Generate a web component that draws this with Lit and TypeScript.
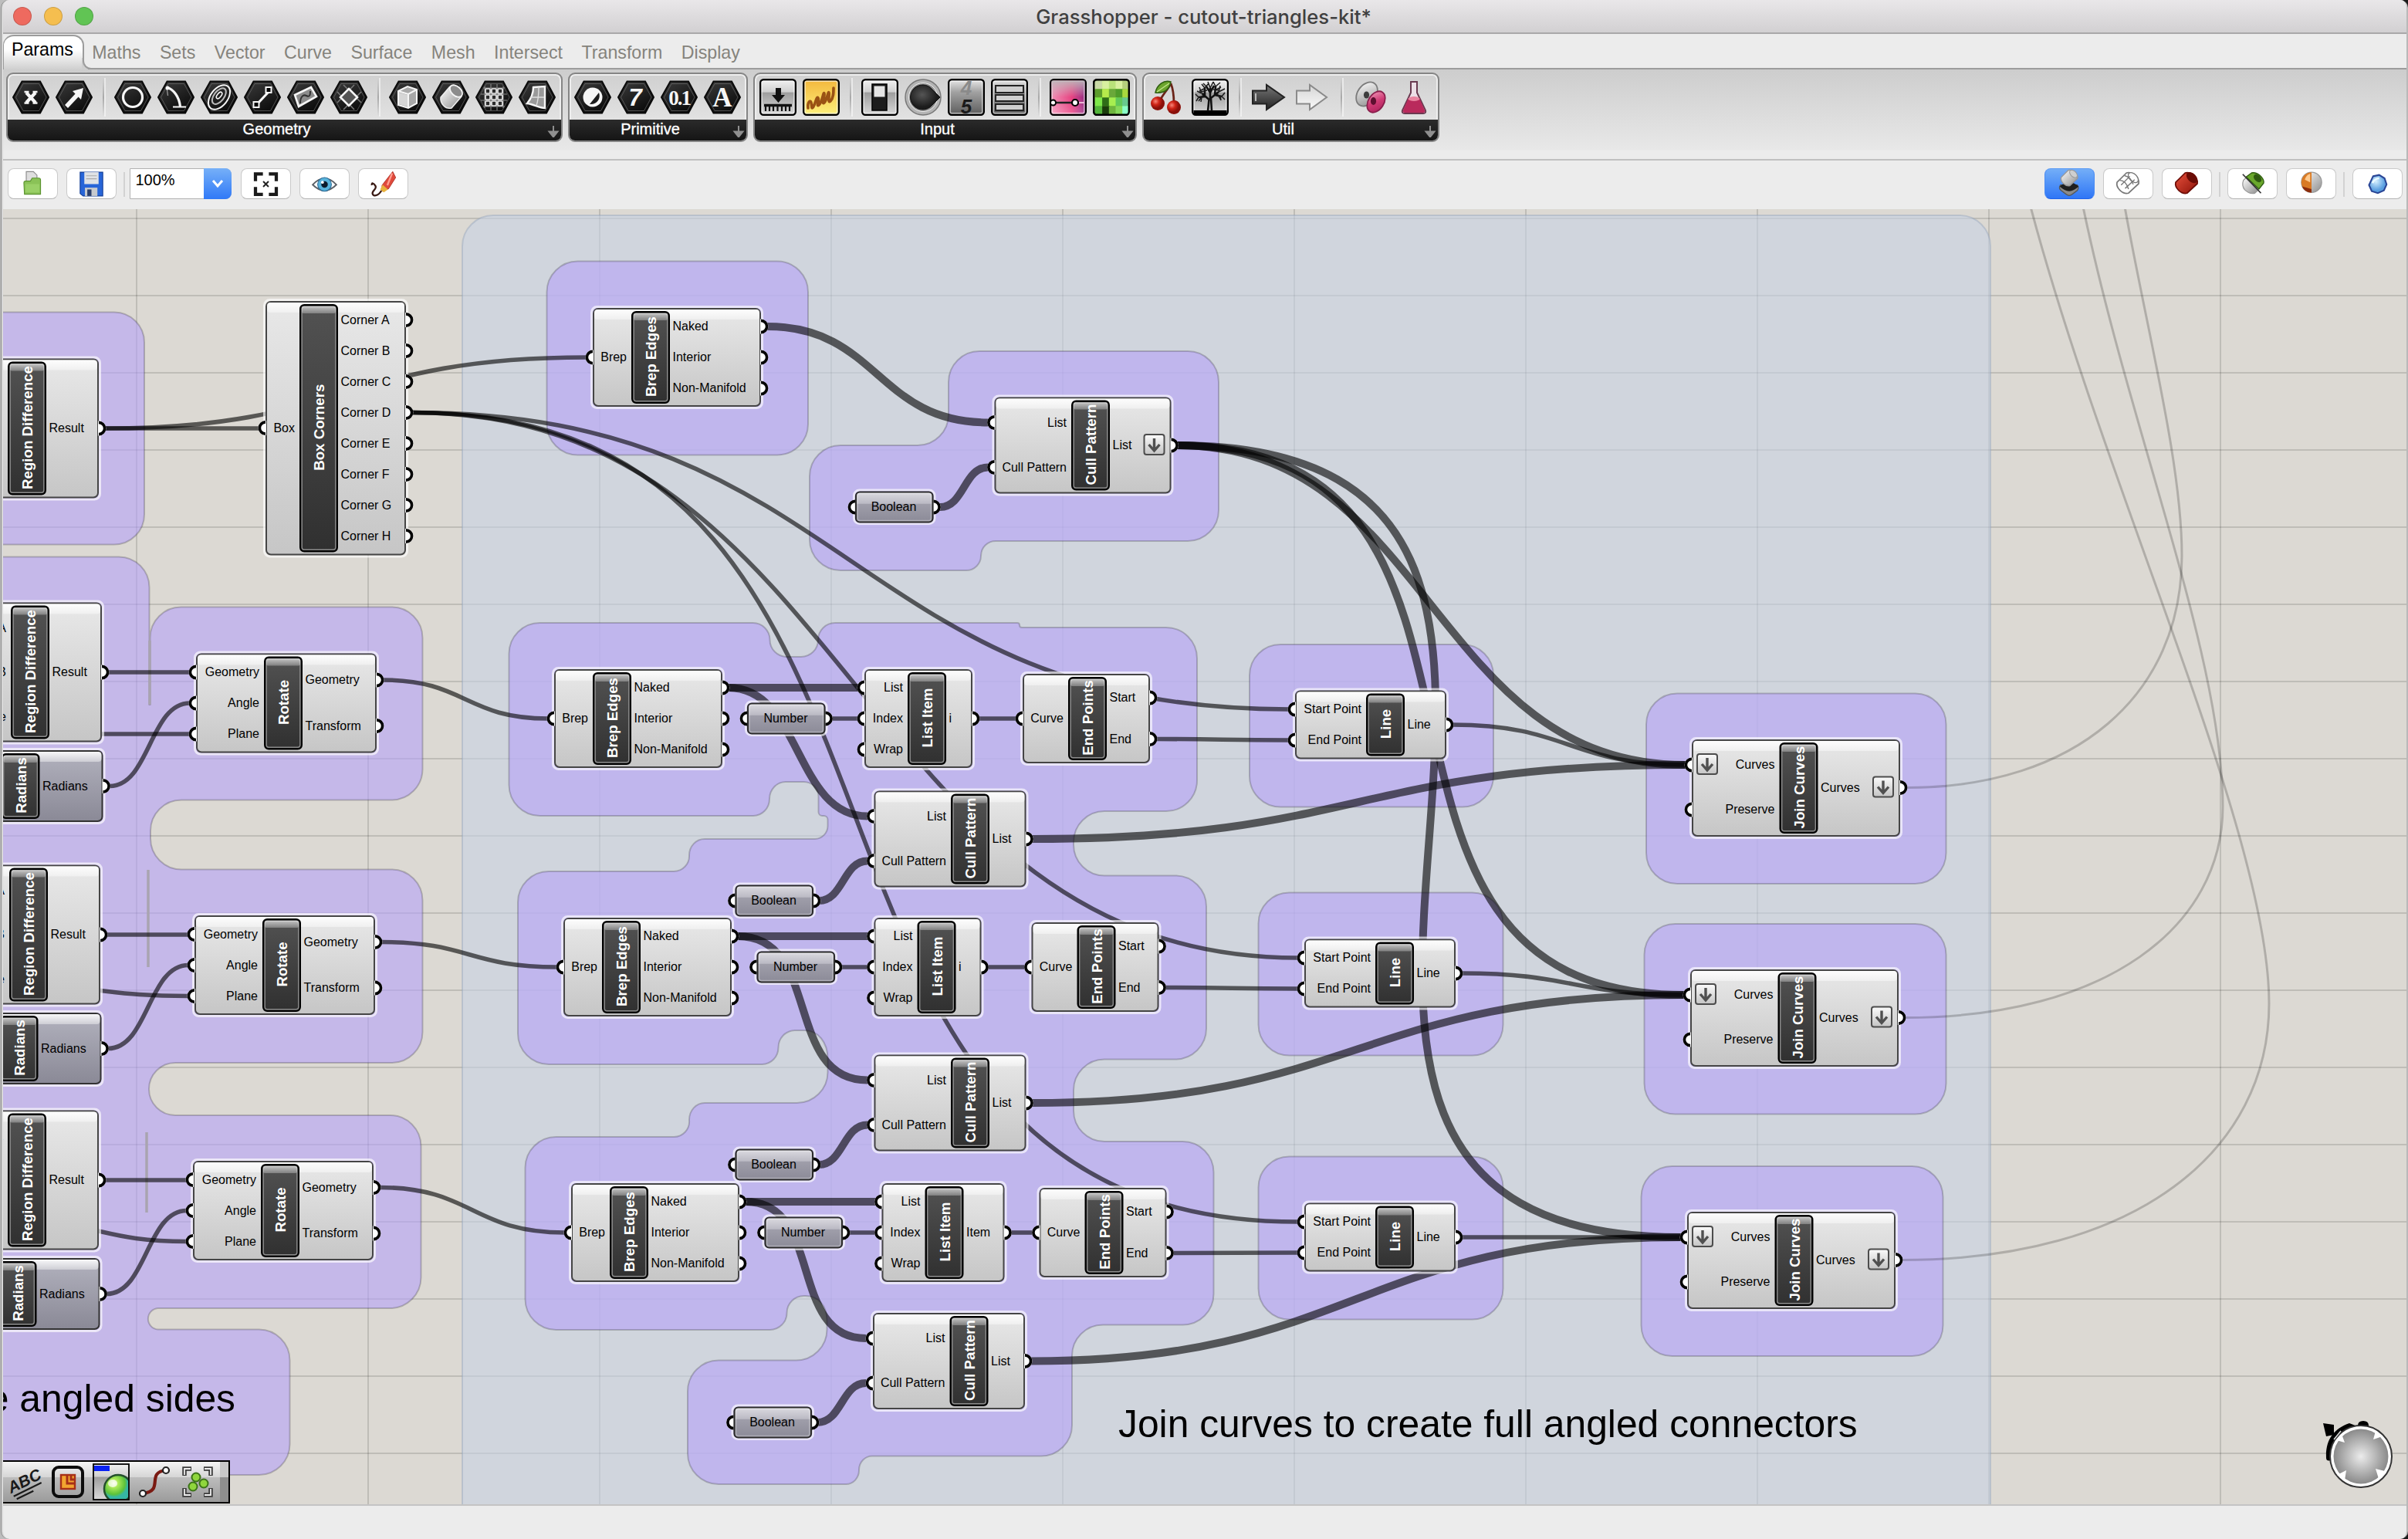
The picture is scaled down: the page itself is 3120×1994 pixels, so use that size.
import { LitElement, html, svg, css } from "lit";
import { customElement } from "lit/decorators.js";

/* ---------- canvas data ---------- */

interface Port {
  t: string;
  y: number;
  arrow?: boolean;
}
interface GhNode {
  x: number;
  y: number;
  w: number;
  h: number;
  lx: number;
  label: string;
  ins: Port[];
  outs: Port[];
  tone?: "blue";
}

const brep = (dx: number, dy: number): GhNode => ({
  x: 768 + dx, y: 399 + dy, w: 218, h: 128, lx: 50, label: "Brep Edges",
  ins: [{ t: "Brep", y: 64 }],
  outs: [{ t: "Naked", y: 24 }, { t: "Interior", y: 64 }, { t: "Non-Manifold", y: 104 }],
});
const item = (x: number, y: number, w: number, out: string): GhNode => ({
  x, y, w, h: 128, lx: 56, label: "List Item",
  ins: [{ t: "List", y: 24 }, { t: "Index", y: 64 }, { t: "Wrap", y: 104 }],
  outs: [{ t: out, y: 64 }],
});
const ends = (dx: number, dy: number): GhNode => ({
  x: 1325 + dx, y: 873 + dy, w: 165, h: 116, lx: 59, label: "End Points",
  ins: [{ t: "Curve", y: 58 }],
  outs: [{ t: "Start", y: 31 }, { t: "End", y: 84.5 }],
});
const cull = (x: number, y: number): GhNode => ({
  x, y, w: 197, h: 125, lx: 99.5, label: "Cull Pattern",
  ins: [{ t: "List", y: 33 }, { t: "Cull Pattern", y: 91 }],
  outs: [{ t: "List", y: 62.5 }],
});
const line = (x: number, y: number): GhNode => ({
  x, y, w: 196, h: 89, lx: 92, label: "Line",
  ins: [{ t: "Start Point", y: 24.5 }, { t: "End Point", y: 64.5 }],
  outs: [{ t: "Line", y: 44.5 }],
});
const join = (x: number, y: number): GhNode => ({
  x, y, w: 270, h: 126, lx: 113.5, label: "Join Curves",
  ins: [{ t: "Curves", y: 33, arrow: true }, { t: "Preserve", y: 91 }],
  outs: [{ t: "Curves", y: 62.5, arrow: true }],
});
const rotate = (x: number, y: number): GhNode => ({
  x, y, w: 234, h: 129, lx: 88, label: "Rotate",
  ins: [{ t: "Geometry", y: 24.5 }, { t: "Angle", y: 64.5 }, { t: "Plane", y: 104.5 }],
  outs: [{ t: "Geometry", y: 34.5 }, { t: "Transform", y: 94 }],
});
const region = (right: number, y: number, ins: boolean): GhNode => ({
  x: right - 190, y, w: 190, h: 181, lx: 72, label: "Region Difference",
  ins: ins ? [{ t: "A", y: 33 }, { t: "B", y: 90 }, { t: "Plane", y: 148 }] : [],
  outs: [{ t: "Result", y: 90.5 }],
});
const radians = (right: number, y: number): GhNode => ({
  x: right - 200, y, w: 200, h: 93, lx: 68, label: "Radians",
  ins: [], outs: [{ t: "Radians", y: 46.5 }], tone: "blue",
});

const nodes: GhNode[] = [
  region(128, 464.5, false),
  region(132, 780.5, true),
  region(130, 1120.5, true),
  region(128, 1438.5, true),
  radians(133.5, 972),
  radians(131.5, 1312),
  radians(129.5, 1630),
  {
    x: 344, y: 390, w: 182, h: 329.5, lx: 44, label: "Box Corners",
    ins: [{ t: "Box", y: 164.5 }],
    outs: ["A", "B", "C", "D", "E", "F", "G", "H"].map((c, i) => ({ t: "Corner " + c, y: 24.5 + i * 40 })),
  },
  rotate(254, 846.5), rotate(252, 1186), rotate(250, 1504),
  brep(0, 0), brep(-50, 468), brep(-38, 790), brep(-28, 1134),
  {
    x: 1288.5, y: 514.5, w: 229, h: 125, lx: 99.5, label: "Cull Pattern",
    ins: [{ t: "List", y: 33 }, { t: "Cull Pattern", y: 91 }],
    outs: [{ t: "List", y: 62.5, arrow: true }],
  },
  item(1120, 867, 140, "i"), item(1132.5, 1189, 139, "i"), item(1142.5, 1533, 159, "Item"),
  ends(0, 0), ends(11.5, 322), ends(21.5, 666),
  cull(1132.5, 1024.5), cull(1132.5, 1366.5), cull(1131, 1701),
  line(1678, 894.5), line(1690, 1216.5), line(1690, 1558.5),
  join(2192, 958), join(2190, 1256), join(2186, 1570),
];

const params: { t: string; x: number; y: number }[] = [
  { t: "Boolean", x: 1108, y: 657 },
  { t: "Number", x: 968, y: 931 },
  { t: "Boolean", x: 952.5, y: 1167 },
  { t: "Number", x: 980.5, y: 1253 },
  { t: "Boolean", x: 952.5, y: 1509 },
  { t: "Number", x: 990.5, y: 1597 },
  { t: "Boolean", x: 950.5, y: 1843 },
];

/* x1, y1, x2, y2, width */
const wires: number[][] = [
  [136, 555, 336, 555, 5.6], [136, 555, 760, 463, 5.6],
  [140, 871, 246, 871, 5.6], [60, 951, 246, 951, 5.6], [142, 1018.5, 246, 911, 5.6],
  [138, 1211, 244, 1211, 5.6], [30, 1278, 244, 1290.5, 5.6], [140, 1358.5, 244, 1250.5, 5.6],
  [136, 1529, 242, 1529, 5.6], [20, 1583, 242, 1608.5, 5.6], [138, 1676.5, 242, 1568.5, 5.6],
  [496, 881, 710, 931, 5.6], [494, 1220.5, 722, 1253, 5.6], [492, 1538.5, 732, 1597, 5.6],
  [535, 534.5, 1670, 919, 5.6], [535, 534.5, 1682, 1241, 5.6], [535, 534.5, 1682, 1583, 5.6],
  [994, 423, 1280, 547.5, 10], [1218, 657, 1280, 605.5, 10],
  [944, 891, 1112, 891, 10], [944, 891, 1124, 1057.5, 10], [1078, 931, 1112, 931, 5.6],
  [1268, 931, 1317, 931, 5.6], [1498, 957.5, 1670, 959, 5.6], [1061, 1167, 1124, 1115.5, 10],
  [956, 1213, 1124, 1213, 10], [956, 1213, 1124, 1399.5, 10], [1090, 1253, 1124, 1253, 5.6],
  [1280, 1253, 1328, 1253, 5.6], [1509, 1279.5, 1682, 1281, 5.6], [1061, 1509, 1124, 1457.5, 10],
  [966, 1557, 1134, 1557, 10], [966, 1557, 1122, 1734, 10], [1100, 1597, 1134, 1597, 5.6],
  [1310, 1597, 1338, 1597, 5.6], [1520, 1623.5, 1682, 1623, 5.6], [1059, 1843, 1122, 1792, 10],
  [1525, 577, 2184, 991, 10], [1525, 577, 2182, 1289, 10], [1525, 577, 2178, 1603, 10],
  [1882, 939, 2184, 991, 5.6], [1338, 1087, 2184, 991, 10],
  [1894, 1261, 2182, 1289, 5.6], [1338, 1429, 2182, 1289, 10],
  [1894, 1603, 2178, 1603, 5.6], [1336, 1763.5, 2178, 1603, 10],
];

const faintWires = [
  "M2470 1020.5C2690 1020.5 2827 900 2827 720C2827 600 2782 430 2753 268",
  "M2468 1318.5C2730 1318.5 2880 1200 2880 1045C2880 850 2760 560 2699 268",
  "M2464 1632.5C2770 1632.5 2940 1490 2940 1300C2940 1080 2730 640 2631 268",
];

const groups = [
  "M-50 404.5H148a39 39 0 0 1 39 39V666.500a39 39 0 0 1 -39 39H-50Z",
  `M-50 721.500H154a39.500 39.500 0 0 1 39.500 39.500V913H194.500V826.500a40 40 0 0 1 40 -40H507.500a40 40 0 0 1 40 40V996.500a40 40 0 0 1 -40 40
   H235a40 40 0 0 0 -40 40V1086.500a40 40 0 0 0 40 40H507.500a40 40 0 0 1 40 40V1337a40 40 0 0 1 -40 40
   H227a34 34 0 0 0 0 68H505.500a40 40 0 0 1 40 40V1655a40 40 0 0 1 -40 40H204.500a13.800 13.800 0 0 0 0 27.500
   H335.500a40 40 0 0 1 40 40V1871a40 40 0 0 1 -40 40H-50Z`,
  "M748.500 338.500H1007a40 40 0 0 1 40 40V549.500a40 40 0 0 1 -40 40H748.500a40 40 0 0 1 -40 -40V378.500a40 40 0 0 1 40 -40Z",
  `M1269 455H1539a40 40 0 0 1 40 40V661a40 40 0 0 1 -40 40H1290a19 19 0 0 0 -19 19a19 19 0 0 1 -19 19H1089a40 40 0 0 1 -40 -40
   V617a40 40 0 0 1 40 -40H1189a40 40 0 0 0 40 -40V495a40 40 0 0 1 40 -40Z`,
  `M699.500 807H975.500a22 22 0 0 1 22 22a22 22 0 0 0 22 22H1038a22 22 0 0 0 22 -22a22 22 0 0 1 22 -22H1318a3 3 0 0 1 3 3a3 3 0 0 0 3 3H1511
   a40 40 0 0 1 40 40V1011a40 40 0 0 1 -40 40H1431a40 40 0 0 0 -40 40V1094.500a40 40 0 0 0 40 40H1523a40 40 0 0 1 40 40V1332.500
   a40 40 0 0 1 -40 40H1431a40 40 0 0 0 -40 40V1439a40 40 0 0 0 40 40H1532.500a40 40 0 0 1 40 40V1676.500a40 40 0 0 1 -40 40
   H1429a40 40 0 0 0 -40 40V1846.500a40 40 0 0 1 -40 40H1130a17 18 0 0 0 -17 18a17 18 0 0 1 -17 18.500H931a40 40 0 0 1 -40 -40V1802.500
   a40 40 0 0 1 40 -40H1031.500a40 40 0 0 0 40 -40V1711c0 -20 -12 -32 -28 -32h-2a22 22 0 0 0 -22 22a22 22 0 0 1 -22 22H720.500a40 40 0 0 1 -40 -40
   V1513a40 40 0 0 1 40 -40H873a20 20 0 0 0 20 -22a20 22 0 0 1 20 -22H1032.500a40 40 0 0 0 40 -40V1372c0 -22 -13 -37 -30 -37h-13a22 22 0 0 0 -21 22a21 22 0 0 1 -21 22
   H711a40 40 0 0 1 -40 -40V1169a40 40 0 0 1 40 -40H873a20 20 0 0 0 20 -21a20 21 0 0 1 20 -21H1056a17 17 0 0 0 16.500 -17V1062a5 5 0 0 0 -5 -5h-2a5 5 0 0 1 -5 -5V1033
   a19 19 0 0 0 -19 -20H1018a21 22 0 0 0 -21 22a21 22 0 0 1 -21 22H699.500a40 40 0 0 1 -40 -40V847a40 40 0 0 1 40 -40Z`,
  ...[
    [1619, 835, 316, 210.5], [1630.5, 1156.5, 317, 211], [1630.5, 1498.5, 317, 211],
    [2133, 898.5, 388.5, 246.5], [2130.5, 1197, 391, 246.5], [2126.5, 1511, 391, 246],
  ].map(([x, y, w, h]) =>
    `M${x + 40} ${y}h${w - 80}a40 40 0 0 1 40 40v${h - 80}a40 40 0 0 1 -40 40h${80 - w}a40 40 0 0 1 -40 -40v${80 - h}a40 40 0 0 1 40 -40Z`),
];

const wirePath = ([x1, y1, x2, y2]: number[]) => {
  const d = Math.max((x2 - x1) / 2, Math.abs(y2 - y1) * 0.74 - 29);
  return `M${x1} ${y1}C${x1 + d} ${y1} ${x2 - d} ${y2} ${x2} ${y2}`;
};

const outPort = (x: number, y: number) => svg`
  <path d="M${x - 1} ${y - 9.5}h1a9.500 9.500 0 0 1 0 19h-1Z" fill="#fff"/>
  <path d="M${x} ${y - 7.6}a7.600 7.600 0 0 1 0 15.200" fill="none" stroke="#000" stroke-width="3.600"/>`;
const inPort = (x: number, y: number) => svg`
  <path d="M${x + 1} ${y - 9.5}h-1a9.500 9.500 0 0 0 0 19h1Z" fill="#fff"/>
  <path d="M${x} ${y - 7.6}a7.600 7.600 0 0 0 0 15.200" fill="none" stroke="#000" stroke-width="3.600"/>`;

const arrowBox = (x: number, y: number) => svg`
  <rect x=${x + 1} y=${y - 13} width="26" height="26" rx="3" fill="url(#btn)" stroke="#4c4c4c" stroke-width="2"/>
  <path d="M${x + 14} ${y - 8}V${y + 7}M${x + 7} ${y}l7 8l7 -8" fill="none" stroke="#505050" stroke-width="3.400"/>`;

const drawNode = (n: GhNode) => {
  const lx = n.x + n.lx;
  const cx = lx + 25;
  const cy = n.y + n.h / 2;
  const r = n.x + n.w;
  return svg`
    <rect x=${n.x - 1.5} y=${n.y - 1.5} width=${n.w + 3} height=${n.h + 3} rx="7" fill="none" stroke="#fff" stroke-opacity=".65" stroke-width="3"/>
    <rect x=${n.x + 1} y=${n.y + 1} width=${n.w - 2} height=${n.h - 2} rx="6" fill=${n.tone ? "url(#bodyBlue)" : "url(#body)"} stroke=${n.tone ? "#333" : "#454545"} stroke-width="2"/>
    <rect x=${n.x + 2} y=${n.y + 2} width=${n.w - 4} height="13" rx="4" fill="url(#shine)"/>
    <rect x=${lx + 1.2} y=${n.y + 5.2} width="47.600" height=${n.h - 10.4} rx="5" fill="url(#dark)" stroke="#000" stroke-width="2.400"/>
    <rect x=${lx + 3.2} y=${n.y + 7.2} width="43.600" height=${n.h - 14.4} rx="3" fill="none" stroke="#8c8c8c" stroke-width="1.400"/>
    <rect x=${lx + 3} y=${n.y + 7} width="44" height="9" rx="2" fill="url(#shineDark)"/>
    <text class="cap" transform="translate(${cx + 7} ${cy - 1}) rotate(-90)">${n.label}</text>
    ${n.ins.map((p) => svg`
      ${inPort(n.x, n.y + p.y)}
      <text class="lbl end" x=${lx - 6} y=${n.y + p.y + 5}>${p.t}</text>
      ${p.arrow ? arrowBox(n.x + 6, n.y + p.y - 1) : ""}`)}
    ${n.outs.map((p) => svg`
      ${outPort(r, n.y + p.y)}
      <text class="lbl" x=${lx + 53.5} y=${n.y + p.y + 5}>${p.t}</text>
      ${p.arrow ? arrowBox(r - 36, n.y + p.y - 1) : ""}`)}`;
};

const drawParam = (p: { t: string; x: number; y: number }) => svg`
  <rect x=${p.x - 1.5} y=${p.y - 22} width="104.500" height="43.500" rx="7" fill="none" stroke="#fff" stroke-opacity=".65" stroke-width="3"/>
  ${inPort(p.x, p.y)}${outPort(p.x + 101.5, p.y)}
  <rect x=${p.x + 1} y=${p.y - 19.5} width="99.500" height="39" rx="5" fill="url(#capsule)" stroke="#2b2b2b" stroke-width="2.200"/>
  <rect x=${p.x + 3} y=${p.y - 17.5} width="95.500" height="35" rx="3" fill="none" stroke="#fff" stroke-opacity=".3" stroke-width="1.500"/>
  <text class="lbl mid" x=${p.x + 50} y=${p.y + 5}>${p.t}</text>`;

const defs = svg`
  <defs>
    <linearGradient id="body" x2="0" y2="1"><stop stop-color="#e8e8e8"/><stop offset="1" stop-color="#c6c6c6"/></linearGradient>
    <linearGradient id="bodyBlue" x2="0" y2="1"><stop stop-color="#b2b2be"/><stop offset="1" stop-color="#8a8996"/></linearGradient>
    <linearGradient id="shine" x2="0" y2="1"><stop stop-color="#fff" stop-opacity=".9"/><stop offset="1" stop-color="#fff" stop-opacity=".4"/></linearGradient>
    <linearGradient id="dark" x2="0" y2="1"><stop stop-color="#525252"/><stop offset="1" stop-color="#303030"/></linearGradient>
    <linearGradient id="shineDark" x2="0" y2="1"><stop stop-color="#fff" stop-opacity=".65"/><stop offset="1" stop-color="#fff" stop-opacity=".28"/></linearGradient>
    <linearGradient id="capsule" x2="0" y2="1"><stop stop-color="#dcdbe1"/><stop offset=".38" stop-color="#bbbac4"/><stop offset=".4" stop-color="#9f9eaa"/><stop offset="1" stop-color="#8b8a97"/></linearGradient>
    <linearGradient id="btn" x2="0" y2="1"><stop stop-color="#fbfbfb"/><stop offset="1" stop-color="#c4c4c4"/></linearGradient>
  </defs>`;

/* ---------- icons ---------- */

const iconDefs = svg`
  <defs>
    <linearGradient id="hex" x2=".6" y2="1"><stop stop-color="#3c3c3c"/><stop offset=".5" stop-color="#242424"/><stop offset="1" stop-color="#0c0c0c"/></linearGradient>
    <linearGradient id="steel" x2="0" y2="1"><stop stop-color="#f2f2f2"/><stop offset=".35" stop-color="#cfcfcf"/><stop offset=".37" stop-color="#9d9d9d"/><stop offset="1" stop-color="#dadada"/></linearGradient>
    <linearGradient id="steelDk" x2="0" y2="1"><stop stop-color="#e8e8e8"/><stop offset=".35" stop-color="#a2a2a2"/><stop offset="1" stop-color="#5c5c5c"/></linearGradient>
    <linearGradient id="gold" x2="0" y2="1"><stop stop-color="#f3b73c"/><stop offset="1" stop-color="#fdf07c"/></linearGradient>
    <linearGradient id="pinkA" x2="1" y2="0"><stop stop-color="#f48bb4"/><stop offset=".6" stop-color="#ea3379"/><stop offset="1" stop-color="#8a1a7c"/></linearGradient>
    <linearGradient id="pinkB" x2="0" y2="1"><stop stop-color="#bbb" stop-opacity=".9"/><stop offset=".5" stop-color="#ccc" stop-opacity=".1"/><stop offset="1" stop-color="#fff" stop-opacity=".25"/></linearGradient>
    <linearGradient id="darkArrow" x2="0" y2="1"><stop stop-color="#777"/><stop offset="1" stop-color="#222"/></linearGradient>
    <linearGradient id="paleArrow" x2="0" y2="1"><stop stop-color="#d5d5d5"/><stop offset="1" stop-color="#fafafa"/></linearGradient>
    <linearGradient id="metal" x2="1" y2="1"><stop stop-color="#fff"/><stop offset="1" stop-color="#8d8d8d"/></linearGradient>
    <linearGradient id="pinkLens" x2="1" y2="1"><stop stop-color="#f3a3c0"/><stop offset=".5" stop-color="#cf3a74"/><stop offset="1" stop-color="#a8205a"/></linearGradient>
    <linearGradient id="redCyl" x2="1" y2="1"><stop stop-color="#e8503c"/><stop offset="1" stop-color="#8c1208"/></linearGradient>
    <radialGradient id="redBall" cx=".35" cy=".35"><stop stop-color="#f7877a"/><stop offset=".5" stop-color="#cf2417"/><stop offset="1" stop-color="#8a100a"/></radialGradient>
    <radialGradient id="greenBall" cx=".35" cy=".3"><stop stop-color="#f4ffd9"/><stop offset=".3" stop-color="#aeea5a"/><stop offset=".8" stop-color="#5cc23a"/><stop offset="1" stop-color="#35b6a4"/></radialGradient>
    <radialGradient id="blueBall" cx=".4" cy=".35"><stop stop-color="#d5f0ff"/><stop offset="1" stop-color="#5a9fe0"/></radialGradient>
    <radialGradient id="knob" cx=".4" cy=".4"><stop stop-color="#555"/><stop offset="1" stop-color="#1c1c1c"/></radialGradient>
  </defs>`;

const icon = (body: unknown) => html`<svg class="ico" viewBox="0 0 48 48">${body}</svg>`;
const hex = (body: unknown) => icon(svg`
  <path d="M12.500 3.500h23.500l11 20.500l-11 20.500h-23.500l-11.500 -20.500Z" fill="url(#hex)" stroke="#0a0a0a" stroke-width="2"/>
  <path d="M14 6.500h20.500l9.500 17.500l-9.500 17.500h-20.500l-9.500 -17.500Z" fill="none" stroke="#777" stroke-opacity=".6" stroke-width="1"/>
  ${body}`);
const tile = (fill: string, body: unknown) => icon(svg`
  <rect x="1.200" y="1.200" width="45.600" height="45.600" rx="4" fill=${fill} stroke="#000" stroke-width="2.400"/>
  <rect x="3.200" y="3.200" width="41.600" height="41.600" rx="2" fill="none" stroke="#fff" stroke-opacity=".6" stroke-width="1.400"/>
  ${body}`);

const W = "#f6f6f6";
const meshCells = [13, 21, 29];
const geometry = [
  [
    hex(svg`<path d="M18 18l12 13M30 18l-12 13" stroke=${W} stroke-width="4.200"/><path d="M15.500 17h6M26.500 17h6M15.500 31.500h6M26.500 31.500h6" stroke=${W} stroke-width="2.500"/>`),
    hex(svg`<path d="M14 36l15 -16" stroke=${W} stroke-width="5.500"/><path d="M22 16l14 -4l-3 15Z" fill=${W}/>`),
  ],
  [
    hex(svg`<circle cx="24" cy="24" r="12.500" fill="none" stroke=${W} stroke-width="3.200"/>`),
    hex(svg`<path d="M12 11c9 3 16 12 17.500 25" fill="none" stroke=${W} stroke-width="3.200"/><path d="M20 36.500h17" stroke=${W} stroke-width="2.200"/><path d="M12 11l1.500 11" stroke="#999" stroke-width="1.300"/><circle cx="13" cy="12" r="2.500" fill=${W}/>`),
    hex(svg`<g transform="rotate(-52 24 24)" fill="none" stroke=${W}><ellipse cx="24" cy="24" rx="18" ry="11" stroke-width="2"/><ellipse cx="25" cy="23" rx="12" ry="6.500" stroke-width="2" stroke="#bbb"/><ellipse cx="26" cy="22.500" rx="5" ry="2.500" stroke-width="1.600"/></g>`),
    hex(svg`<path d="M17 33L33 16" stroke=${W} stroke-width="3.200"/><rect x="12.500" y="30" width="7" height="7" fill="#000" stroke=${W} stroke-width="2"/><rect x="28.500" y="11" width="7" height="7" fill="#000" stroke=${W} stroke-width="2"/>`),
    hex(svg`<path d="M10 21L31 11L38 23L15 36Z" fill="#8c8c8c" stroke=${W} stroke-width="2.600"/><path d="M17 32c0 -9 4 -12 8 -10s5 0 5 -6" fill="none" stroke="#333" stroke-width="2"/>`),
    hex(svg`<path d="M9 31L31 8M17 40L40 17M17 8L40 31M9 17L31 40" stroke="#777" stroke-width="1.600"/><path d="M24 13L35 24L24 35L13 24Z" fill="#555" stroke=${W} stroke-width="2.600"/>`),
  ],
  [
    hex(svg`<path d="M12 16L24 10L36 14V32L25 38L12 34Z" fill="#a8a8a8" stroke=${W} stroke-width="2"/><path d="M12 16L25 20L36 14M25 20V38" fill="none" stroke=${W} stroke-width="2"/><path d="M13 18L24 21V36L13 33Z" fill="#d6d6d6"/>`),
    hex(svg`<path d="M23 10L11 24C10 32 17 40 25 38L38 23Z" fill="url(#metal)"/><path d="M23 10L11 24C10 32 17 40 25 38L38 23" fill="none" stroke="#eee" stroke-width="1.500"/><ellipse cx="31" cy="16" rx="9.500" ry="6" transform="rotate(42 31 16)" fill="#8c8c8c" stroke=${W} stroke-width="1.800"/>`),
    hex(svg`<path d="M7 20h34M7 28h34M20 7v34M28 7v34M10 12h28M10 36h28M12 10v28M36 10v28" stroke="#8a8a8a" stroke-width="1.100"/><g fill="#2c2c2c" stroke="#ececec" stroke-width="1.700">${meshCells.map((y) => meshCells.map((x) => svg`<rect x=${x} y=${y} width="6" height="6" rx="1"/>`))}</g>`),
    hex(svg`<path d="M19 11L34 10V38C26 38 20 33 11 32C16 26 19 20 19 11Z" fill="#9a9a9a" stroke=${W} stroke-width="2.400"/><path d="M26 11c0 10 -1 18 -3 24M15 24h18" stroke="#ddd" stroke-width="1.400" fill="none"/>`),
  ],
];
const primitive = [
  [
    hex(svg`<circle cx="24" cy="24" r="12.500" fill=${W}/><path d="M32 18c3 8 -3 16 -12 15Z" fill="#1c1c1c"/>`),
    hex(svg`<text class="glyph" x="23" y="35">7</text>`),
    hex(svg`<text class="glyph serif" x="24" y="34">0.1</text>`),
    hex(svg`<text class="glyph serif big" x="24" y="36">A</text>`),
  ],
];
const mosaic = [
  ["#c9d9a6", "#d8f0a0", "#b9e27a", "#d9f0a0", "#b5cf7c"],
  ["#5c9c2c", "#b6ea4c", "#6aa83a", "#4f9c2a", "#a9d83e"],
  ["#7ee84a", "#2f6d18", "#a6ee50", "#60c85a", "#68c98e"],
  ["#52b43a", "#1b3c0c", "#6eb53e", "#85d95a", "#8affc8"],
];
const input = [
  [
    tile("url(#steel)", svg`<path d="M21 12h7v9h5l-8.500 10l-8.500 -10h5Z" fill="#111"/><path d="M6 34.500h36" stroke="#111" stroke-width="3.500"/><path d="M8 36v6M13 36v6M18 36v6M23.500 36v6M29 36v6M34 36v6M39 36v6" stroke="#111" stroke-width="2.200"/>`),
    tile("url(#gold)", svg`<path d="M7 38C6 30 10 27 11 31S11 41 14 36S18 22 20 25S17 37 21 34S27 16 28 19S24 35 28 31S33 15 34 18S32 33 36 29S40 18 40 12" fill="none" stroke="#9a5214" stroke-width="3.600" stroke-linecap="round" stroke-linejoin="round"/>`),
  ],
  [
    tile("url(#steel)", svg`<rect x="14" y="7" width="19" height="34" fill="#1c1c1c" stroke="#000" stroke-width="1.500"/><rect x="16.500" y="9.500" width="14" height="14" fill="#e4e4e4"/>`),
    icon(svg`<circle cx="24" cy="24" r="23" fill="#b4b4b4" stroke="#777" stroke-width="1.500"/><circle cx="24" cy="24" r="18.500" fill="#8d8d8d" stroke="#eee" stroke-width="1"/><path d="M24 8a16 16 0 1 0 12 26l10 -10l-10 -10a16 16 0 0 0 -12 -6Z" fill="url(#knob)" stroke="#111" stroke-width="1"/>`),
    tile("url(#steelDk)", svg`<text class="glyph digit dim" x="24" y="21">4</text><text class="glyph digit" x="24" y="44.500">5</text>`),
    tile("url(#steelDk)", svg`<g fill="#cfcfcf" stroke="#222" stroke-width="2"><rect x="6" y="9" width="36" height="9"/><rect x="6" y="21" width="36" height="8"/><rect x="6" y="33" width="36" height="8"/></g>`),
  ],
  [
    tile("url(#pinkA)", svg`<rect x="2.500" y="2.500" width="43" height="43" fill="url(#pinkB)"/><path d="M4 31h29" stroke="#222" stroke-width="2.500"/><path d="M33 31h12" stroke="#e9b6d4" stroke-width="2"/><circle cx="4.500" cy="31" r="3.500" fill="#fff" stroke="#000" stroke-width="2"/><circle cx="33" cy="31" r="4" fill="#fff" stroke="#000" stroke-width="2.200"/>`),
    tile("#7c3", svg`${mosaic.map((row, r) => row.map((c, k) => svg`<rect x=${2.4 + k * 8.7 + (k ? 1 : 0)} y=${2.4 + r * 11} width="10" height="11" fill=${c}/>`))}<rect x="1.200" y="1.200" width="45.600" height="45.600" rx="4" fill="none" stroke="#000" stroke-width="2.400"/>`),
  ],
];
const util = [
  [
    icon(svg`<path d="M29 6C25 14 19 20 15 28M29 6C33 16 33 24 33 32" fill="none" stroke="#6b2418" stroke-width="2.800"/><path d="M29 4C20 1 11 8 9 18C19 19 27 15 29 4Z" fill="#6ba52c" stroke="#2e5c10" stroke-width="1.500"/><path d="M11 17L27 6" stroke="#c4e48c" stroke-width="1.400"/><circle cx="12" cy="32" r="9" fill="url(#redBall)"/><circle cx="33" cy="37" r="9" fill="url(#redBall)"/>`),
    tile("url(#steel)", svg`<rect x="2.500" y="41" width="43" height="5" fill="#000"/><path d="M21 42l1.500 -15l-9 -8M26 42l-1 -17l10 -8M24 28V12M18 23l-9 1M17 22l0 -10M30 21l9 2M30 21l1 -11M24 18l-5 -8M24 18l5 -9" stroke="#111" stroke-width="2.600" fill="none"/><g fill="none" stroke="#1a1a1a" stroke-width="1.500"><path d="M9 24l-4 -4M9 24l-3 5M13 19l-6 -3M13 19l-3 -8M17 12l-4 -5M17 12l5 -6M19 10l-4 -4M24 12l-3 -8M24 12l4 -8M31 10l-3 -6M31 10l6 -5M35 17l2 -8M35 17l8 -4M39 23l4 -5M39 23l4 4M15 21l-6 8M33 19l5 9M20 15l-8 2M28 14l7 1M13 24l-1 6M37 22l1 6M10 16l6 -3M32 14l6 -3"/></g>`),
  ],
  [
    icon(svg`<path d="M3 15.500h18V8L44 24L21 40V32.500H3Z" fill="url(#darkArrow)" stroke="#222" stroke-width="2"/><path d="M7 19v10" stroke="#bbb" stroke-width="2"/>`),
    icon(svg`<path d="M4 15.500h17V8L43 24L21 40V32.500H4Z" fill="url(#paleArrow)" stroke="#8a8a8a" stroke-width="2"/>`),
  ],
  [
    icon(svg`<ellipse cx="19" cy="20" rx="12" ry="17" transform="rotate(35 19 20)" fill="url(#metal)" stroke="#7c7c7c" stroke-width="1.800"/><ellipse cx="18.500" cy="21" rx="3.600" ry="4.600" fill="#3c3c3c"/><ellipse cx="31" cy="30" rx="10" ry="15" transform="rotate(33 31 30)" fill="url(#pinkLens)" stroke="#8a1f4c" stroke-width="1.800"/><ellipse cx="27.500" cy="29" rx="3.600" ry="5" fill="#5d0f30"/>`),
    icon(svg`<path d="M20 4h8V18L39 41Q40 45 36 45H12Q8 45 9 41L20 18Z" fill="#ecdfe6" stroke="#6a3a50" stroke-width="2"/><path d="M16.500 26H31.500L38 41Q39 44 36 44H12Q9 44 10 41Z" fill="#b92a5c"/><ellipse cx="24" cy="26" rx="7.500" ry="3" fill="#e9839f"/>`),
  ],
];

const captionArrow = svg`<path d="M8 1v9M2.500 8.500h11L8 15.500Z" stroke="#8f8f8f" stroke-width="2" fill="#8f8f8f"/>`;

const panels = [
  { name: "Geometry", sets: geometry },
  { name: "Primitive", sets: primitive },
  { name: "Input", sets: input },
  { name: "Util", sets: util },
];

const fileIcons = {
  open: icon(svg`<path d="M13 3h12l6 6v16H13Z" fill="#dedede" stroke="#8b8b8b" stroke-width="1.500"/><path d="M9 22q0 -3 3 -3h8l3 -5h11q3 0 3 3V41H10Z" fill="#8ac257" stroke="#5c9430" stroke-width="1.500"/><path d="M12 24h23v14H12Z" fill="#9ad067"/>`),
  save: icon(svg`<path d="M5 4h38v40H10l-5 -4Z" fill="#2765d8" stroke="#174096" stroke-width="1.500"/><rect x="12" y="4" width="24" height="20" fill="#dfe2e6"/><path d="M15 10h18M15 15h18" stroke="#aaa" stroke-width="1.500"/><rect x="13" y="30" width="21" height="14" fill="#c7cace"/><rect x="17" y="33" width="7" height="11" fill="#2b3f6b"/>`),
  zoom: icon(svg`<path d="M6.500 19V7H19M29 7H41.500V19M41.500 29V41.500H29M19 41.500H6.500V29" fill="none" stroke="#1a1a1a" stroke-width="5.500"/><path d="M19.500 19.500l9 9M28.500 19.500l-9 9" stroke="#222" stroke-width="2.600"/>`),
  eye: icon(svg`<path d="M4 25Q24 4 44 25Q24 45 4 25Z" fill="#fff" stroke="#5a5f66" stroke-width="2.400"/><circle cx="24" cy="24.500" r="11.500" fill="#58b4dc" stroke="#2c6a96" stroke-width="1.500"/><circle cx="24" cy="24.500" r="5.500" fill="#0c1c2c"/><circle cx="20.500" cy="21" r="2.400" fill="#fff"/>`),
  pen: icon(svg`<path d="M40 3L45 13L33 32L22 36L22 26Z" fill="#e04a3c" stroke="#a4281c" stroke-width="1"/><path d="M39 6L31 26" stroke="#ff9f92" stroke-width="3"/><path d="M23 25L32 33L25 38L19 33Z" fill="#e8b23c"/><path d="M21 35C15 45 7 45 6 40S14 32 11 27S4 21 5 26" fill="none" stroke="#3a1a14" stroke-width="3"/>`),
};

const cyl = (fill: string, top: string, stroke: string) => svg`
  <path d="M22 8L8 22C6 30 16 40 25 38L40 24C42 16 31 6 22 8Z" fill=${fill} stroke=${stroke} stroke-width="2"/>
  <ellipse cx="32" cy="15" rx="9" ry="5.500" transform="rotate(45 32 15)" fill=${top} stroke=${stroke} stroke-width="1.500"/>`;
const viewIcons = [
  [
    icon(svg`<path d="M11 26q-3 5 1 8l8 6q4 3 8 0l8 -6q3 -4 0 -8Z" fill="#8a8a8a" stroke="#555" stroke-width="1.500"/><path d="M10 28Q24 16 38 28Q24 42 10 28Z" fill="#1f1f1f"/><g transform="translate(6 -2) scale(.76)">${cyl("url(#metal)", "#cfcfcf", "#999")}</g>`),
    icon(svg`${cyl("#fff", "#fff", "#777")}<path d="M12 19q9 0 13 13M19 12q9 2 13 13M14 26L27 13M20 31L34 18" fill="none" stroke="#777" stroke-width="1.600"/>`),
    icon(cyl("url(#redCyl)", "#6a0c06", "#6c0c06")),
  ],
  [
    icon(svg`<path d="M10 19q-3 8 2 14q7 7 15 5l5 -5L14 15Z" fill="url(#metal)" stroke="#999" stroke-width="1.500"/><path d="M14 14L22 8C31 6 41 16 40 23L33 32Z" fill="#6aa82c" stroke="#2e5c10" stroke-width="1.500"/><ellipse cx="31" cy="16" rx="7" ry="4.500" transform="rotate(45 31 16)" fill="#2f5a10"/><path d="M9 10L36 38" stroke="#333" stroke-width="2"/>`),
    icon(svg`<circle cx="24" cy="22" r="15" fill="url(#metal)" stroke="#999" stroke-width="1.500"/><path d="M24 7a15 15 0 0 0 0 30Z" fill="#d97a24"/><path d="M22 9a13 13 0 0 0 -8 9l8 4Z" fill="#ffc98c"/><path d="M10 28a15 15 0 0 0 14 9v-5Z" fill="#8c2c0c"/>`),
  ],
  [
    icon(svg`<path d="M18 13L27 11L35 16L38 25L34 34L25 38L16 35L12 26Z" fill="url(#blueBall)" stroke="#2a4696" stroke-width="2.400"/><path d="M17 23q4 -7 10 -7" stroke="#eafaff" stroke-width="3" fill="none"/>`),
  ],
];

const tools = [
  icon(svg`<g transform="rotate(-26 24 24)"><text class="glyph abc" x="24" y="30">ABC</text><path d="M3 34.500h40M5 39.500h24" stroke="#1a1a1a" stroke-width="2.200"/></g>`),
  icon(svg`<rect x="5" y="5" width="38" height="38" rx="7" fill="none" stroke="#0c0c0c" stroke-width="4"/><rect x="15" y="15" width="18" height="18" fill="#f2a530" stroke="#a63018" stroke-width="2.400"/><path d="M23 15v11h10M28 15v6h5" stroke="#a63018" stroke-width="3" fill="none"/>`),
  icon(svg`<defs><clipPath id="clipTool"><rect x="2" y="2" width="44" height="44"/></clipPath></defs><rect x="1" y="1" width="46" height="46" fill="url(#steel)" stroke="#000" stroke-width="1.800"/><g clip-path="url(#clipTool)"><circle cx="33" cy="33" r="18" fill="url(#greenBall)" stroke="#24502c" stroke-width="2.500"/><ellipse cx="26" cy="26" rx="6" ry="5" fill="#fff" fill-opacity=".7"/></g><rect x="2" y="3" width="20" height="7" fill="#0a22f4"/>`),
  icon(svg`<path d="M9 39C38 36 12 12 39 9" fill="none" stroke="#7a1a12" stroke-width="4.200"/><circle cx="9" cy="39" r="4" fill="#fff" stroke="#222" stroke-width="2.200"/><circle cx="39" cy="9" r="4" fill="#fff" stroke="#222" stroke-width="2.200"/>`),
  icon(svg`<g fill="none" stroke="#3c3c3c" stroke-width="5.500"><path d="M7 16V7H16M32 7H41V16M41 32V41H32M16 41H7V32"/></g><g fill="none" stroke="#eee" stroke-width="1.800"><path d="M7 15V7H15M33 7H41V15M41 33V41H33M15 41H7V33"/></g><g fill="#8fd63c" stroke="#3c7418" stroke-width="2"><circle cx="22" cy="18" r="5.500"/><circle cx="32" cy="26" r="5.500"/><circle cx="18" cy="30" r="5.500"/></g>`),
];

const tabs = ["Maths", "Sets", "Vector", "Curve", "Surface", "Mesh", "Intersect", "Transform", "Display"];
const verticals = Array.from({ length: 10 }, (_, i) => 177 + i * 300);
const horizontals = Array.from({ length: 17 }, (_, i) => 283 + i * 100);

@customElement("app-root")
export class AppRoot extends LitElement {
  static styles = css`
    :host { display: block; width: 3120px; height: 1994px; background: linear-gradient(90deg, #bdbdbd 50%, #1a1a1a 50%); font-family: "Liberation Sans", Arial, sans-serif; }
    * { box-sizing: border-box; }
    .window { height: 1994px; margin-left: 2px; display: flex; flex-direction: column; background: #ececec; border-left: 2px solid #d8d8d8; border-right: 2px solid #b9b9b9; border-radius: 10px; overflow: hidden; box-shadow: -1px 0 0 #8e8e8e; }
    .defs { position: absolute; width: 0; height: 0; }
    .title { height: 44px; flex: none; display: flex; align-items: center; background: linear-gradient(#e9e7e9, #d2d0d2); border-bottom: 2px solid #a9a8a9; padding-left: 13px; gap: 16px; }
    .dot { width: 24px; height: 24px; border-radius: 50%; border: 1px solid rgba(0, 0, 0, .16); }
    .red { background: #ee6a5f; } .yellow { background: #f5be4f; } .green { background: #61c454; }
    .name { flex: 1; text-align: center; padding-right: 136px; font: 500 25.600px "Inter", "Liberation Sans", sans-serif; letter-spacing: 0; color: #404040; line-height: 42px; padding-top: 1px; }
    .tabs { height: 46px; flex: none; display: flex; align-items: stretch; font-size: 23.200px; color: #85837c; box-shadow: inset 0 -2px #9c9c9c; }
    .tab { padding: 10px 12.250px 0; line-height: 28px; }
    .tab.on { position: relative; width: 105px; margin: 1px -2px 0 0; padding: 3px 0 0 10px; color: #000; border: 2px solid #9c9c9c; border-left-width: 1px; border-bottom: 0; border-radius: 14px 14px 0 0; background: linear-gradient(#fff 40%, #cfcfcf); }
    .tab.on::after { content: ""; position: absolute; left: 102px; bottom: 0; width: 12px; height: 20px; border: solid #9c9c9c; border-width: 0 0 2px 2px; border-bottom-left-radius: 11px; background: #ececec; box-shadow: -5px 5px 0 -2px #cfcfcf; clip-path: inset(0 0 0 -1px); }
    .ribbon { height: 116px; flex: none; padding: 4px 0 0 4px; display: flex; gap: 7px; background: linear-gradient(#cdcdcd, #e8e8e8 104px, #ececec 105px); }
    .panel { height: 90px; border: 2px solid #858585; border-radius: 9px; background: linear-gradient(#d0d0d0, #e2e2e2 60px); overflow: hidden; display: flex; flex-direction: column; box-shadow: inset 0 0 0 2px #eee; }
    .row { height: 59px; flex: none; display: flex; align-items: center; padding: 0 3px 0 2px; }
    .cell { width: 56px; display: flex; justify-content: center; }
    .sep { width: 20px; height: 50px; display: flex; justify-content: center; }
    .sep::before { content: ""; width: 2px; background: linear-gradient(transparent, #a9a9a9, transparent); box-shadow: 2px 0 rgba(255, 255, 255, .5); }
    .caption { flex: 1; display: flex; align-items: center; color: #fff; font-size: 20px; line-height: 24px; background: linear-gradient(#2b2b2b, #151515); -webkit-text-stroke: .35px #fff; padding-bottom: 3px; }
    .caption span { flex: 1; text-align: center; }
    .caption svg { width: 16px; height: 16px; margin: 6px 2px 0 2px; }
    .ico { width: 48px; height: 48px; display: block; }
    .toolbar { height: 65px; flex: none; border-top: 2px solid #c0c0c0; display: flex; align-items: flex-start; padding: 10px 5.500px 0 6px; gap: 11px; }
    .btn { width: 65px; height: 40px; border-radius: 8px; background: #fff; border: 1px solid #cacaca; border-bottom-color: #b3b3b3; display: flex; align-items: center; justify-content: center; }
    .btn .ico { width: 37px; height: 37px; }
    .btn.view .ico { width: 42px; height: 42px; }
    .btn.on { background: linear-gradient(#73aef8, #2f76f6); border-color: #5c9bf4 #4a8cf4 #1f63ec; }
    .bar { width: 2px; height: 32px; margin: 5px -1.750px 0; background: #d2d2d2; }
    .combo { width: 132px; height: 40px; display: flex; border: 1px solid #b2b2b2; background: #fff; font-size: 20px; line-height: 29px; padding-left: 7px; margin-left: -4px; margin-right: 1px; border-radius: 0 8px 8px 0; }
    .combo span { flex: 1; }
    .drop { width: 36px; margin: -1px; border-radius: 0 8px 8px 0; background: linear-gradient(#76b0f8, #3079f7); display: flex; align-items: center; justify-content: center; }
    .drop svg { width: 16px; height: 12px; }
    .grow { flex: 1; }
    .canvas { height: 1678px; flex: none; position: relative; background: #dcd9d3; }
    .scene { display: block; width: 3114px; height: 1678px; }
    .status { flex: 1; border-top: 2px solid #c4c4c4; }
    .palette { position: absolute; left: 0; bottom: 1px; width: 294px; height: 56px; border: 2px solid #000; border-left: 0; display: flex; align-items: center; gap: 8px; padding-left: 4px; background: linear-gradient(#f4f4f4, #d6d6d6 38%, #bdbdbd 38%, #9b9b9b); }
    .grip { width: 11px; align-self: stretch; background: linear-gradient(#c8c8c8 38%, #8e8e8e 38%); margin-left: -3px; }
    .compass { position: absolute; right: 14px; bottom: 14px; width: 94px; height: 94px; }
    .lbl { font-size: 16px; fill: #000; }
    .end { text-anchor: end; }
    .mid { text-anchor: middle; }
    .cap { font-size: 18.700px; font-weight: bold; fill: #fff; text-anchor: middle; }
    .note { font-size: 49.800px; fill: #000; }
    .wire { fill: none; stroke: #000; stroke-opacity: .6; }
    .faint { fill: none; stroke: #000; stroke-opacity: .2; stroke-width: 3px; }
    .glyph { fill: #f6f6f6; text-anchor: middle; font: bold italic 31px "Liberation Sans", sans-serif; }
    .serif { font: bold 27px "Liberation Serif", serif; letter-spacing: -2px; }
    .big { font-size: 35px; letter-spacing: 0; }
    .digit { fill: #1a1a1a; font: italic bold 26px "Liberation Sans", sans-serif; }
    .dim { fill: #8a8a8a; }
    .abc { fill: #1a1a1a; font: italic bold 21px "Liberation Sans", sans-serif; }
  `;

  private ribbonPanel(p: { name: string; sets: unknown[][] }) {
    return html`<div class="panel">
      <div class="row">
        ${p.sets.map((set, i) => html`${i ? html`<div class="sep"></div>` : ""}${set.map((g) => html`<div class="cell">${g}</div>`)}`)}
      </div>
      <div class="caption"><span>${p.name}</span><svg viewBox="0 0 16 16">${captionArrow}</svg></div>
    </div>`;
  }

  render() {
    return html`
      <svg class="defs">${iconDefs}</svg>
      <div class="window">
        <div class="title">
          <div class="dot red"></div><div class="dot yellow"></div><div class="dot green"></div>
          <div class="name">Grasshopper - cutout-triangles-kit*</div>
        </div>
        <div class="tabs">
          <div class="tab on">Params</div>
          ${tabs.map((t) => html`<div class="tab">${t}</div>`)}
        </div>
        <div class="ribbon">${panels.map((p) => this.ribbonPanel(p))}</div>
        <div class="toolbar">
          <div class="btn">${fileIcons.open}</div>
          <div class="btn">${fileIcons.save}</div>
          <div class="bar"></div>
          <div class="combo"><span>100%</span><div class="drop"><svg viewBox="0 0 16 12"><path d="M2 2l6 7l6 -7" fill="none" stroke="#fff" stroke-width="3"/></svg></div></div>
          <div class="btn">${fileIcons.zoom}</div>
          <div class="btn">${fileIcons.eye}</div>
          <div class="btn">${fileIcons.pen}</div>
          <div class="grow"></div>
          ${viewIcons.map((set, i) => html`${i ? html`<div class="bar"></div>` : ""}${set.map((g, k) => html`<div class="btn view ${i === 0 && k === 0 ? "on" : ""}">${g}</div>`)}`)}
        </div>
        <div class="canvas">
          <svg class="scene" viewBox="4 271 3114 1678">
            ${defs}
            ${verticals.map((x) => svg`<rect x=${x - 1} y="271" width="2" height="1678" fill="#000" fill-opacity=".13"/>`)}
            ${horizontals.map((y) => svg`<rect x="4" y=${y - 1} width="3114" height="2" fill="#000" fill-opacity=".13"/>`)}
            <rect x="599" y="279" width="1980" height="1800" rx="40" fill="#c8d2e4" fill-opacity=".6" stroke="#8fa0b8" stroke-opacity=".4" stroke-width="2"/>
            ${groups.map((d) => svg`<path d=${d} fill="#b6a2f9" fill-opacity=".6" stroke="#000" stroke-opacity=".2" stroke-width="2"/>`)}
            <path d="M194 830V913M192 1127V1253M190 1467V1571" stroke="#a9a4b0" stroke-width="3.500" fill="none"/>
            <text class="note end" x="305" y="1829">e angled sides</text>
            <text class="note" x="1449" y="1862">Join curves to create full angled connectors</text>
            ${faintWires.map((d) => svg`<path class="faint" d=${d}/>`)}
            ${wires.map((w) => svg`<path class="wire" d=${wirePath(w)} stroke-width=${w[4]}/>`)}
            ${nodes.map(drawNode)}
            ${params.map(drawParam)}
          </svg>
          <div class="palette">${tools}<div class="grip"></div></div>
          <svg class="compass" viewBox="0 0 94 94">
            ${svg`<defs><radialGradient id="knobFace"><stop stop-color="#ececec"/><stop offset="1" stop-color="#8a8a8a"/></radialGradient></defs>
            <path d="M0 3L14 5V18L4 20Z" fill="#000"/>
            <path d="M4 48C3 24 14 10 34 3L42 6L40 14L14 50Q4 54 4 48Z" fill="#000"/>
            <path d="M45 6q0 -6 7 -6t7 6v4H45Z" fill="#000"/>
            <circle cx="49" cy="46" r="40" fill="#fff" stroke="#333" stroke-width="2"/>
            <circle cx="49" cy="46" r="35.500" fill="url(#knobFace)"/>
            <path d="M17 25L24 17L28 28ZM65 24L68 13L77 20ZM18 70L30 64L28 77ZM68 62L80 65L72 75Z" fill="#fff"/>
            <path d="M14 24L23 13" stroke="#ddd" stroke-width="1.500"/>`}
          </svg>
        </div>
        <div class="status"></div>
      </div>
    `;
  }
}
